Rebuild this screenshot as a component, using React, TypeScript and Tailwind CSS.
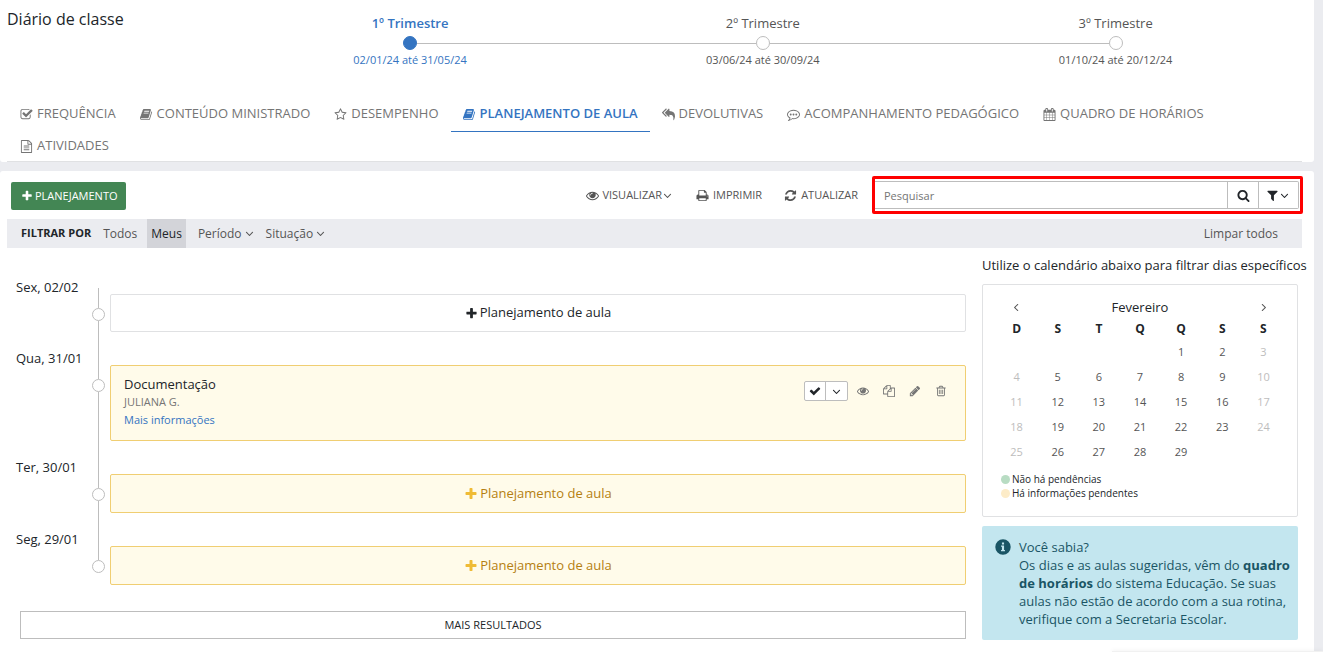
import React from "react";

const icons = {
  book: "M1639 478q40 57 18 129l-275 906q-19 64-76.5 107.5t-122.5 43.5h-923q-77 0-148.5-53.5t-99.5-131.5q-24-67-2-127 0-4 3-27t4-37q1-8-3-21.5t-3-19.5q2-11 8-21t16.5-23.5 16.5-23.5q23-38 45-91.5t30-91.5q3-10 .5-30t-.5-28q3-11 17-28t17-23q21-36 42-92t25-90q1-9-2.5-32t.5-28q4-13 22-30.5t22-22.5q19-26 42.5-84.5t27.5-96.5q1-8-3-25.5t-2-26.5q2-8 9-18t18-23 17-21q8-12 16.5-30.5t15-35 16-36 19.5-32 26.5-23.5 36-11.5 47.5 5.5l-1 3q38-9 51-9h761q74 0 114 56t18 130l-274 906q-36 119-71.5 153.5t-128.5 34.5h-869q-27 0-38 15-11 16-1 43 24 70 144 70h923q29 0 56-15.5t35-41.5l300-987q7-22 5-57 38 15 59 43zm-1064 2q-4 13 2 22.5t20 9.5h608q13 0 25.5-9.5t16.5-22.5l21-64q4-13-2-22.5t-20-9.5h-608q-13 0-25.5 9.5t-16.5 22.5zm-83 256q-4 13 2 22.5t20 9.5h608q13 0 25.5-9.5t16.5-22.5l21-64q4-13-2-22.5t-20-9.5h-608q-13 0-25.5 9.5t-16.5 22.5z",
  eye: "M1664 960q-152-236-381-353 61 104 61 225 0 185-131.5 316.5t-316.5 131.5-316.5-131.5-131.5-316.5q0-121 61-225-229 117-381 353 133 205 333.5 326.5t434.5 121.5 434.5-121.5 333.5-326.5zm-720-384q0-20-14-34t-34-14q-125 0-214.5 89.5t-89.5 214.5q0 20 14 34t34 14 34-14 14-34q0-86 61-147t147-61q20 0 34-14t14-34zm848 384q0 34-20 69-140 230-376.5 368.5t-499.5 138.5-499.5-139-376.5-368q-20-35-20-69t20-69q140-229 376.5-368t499.5-139 499.5 139 376.5 368q20 35 20 69z",
  pencil: "M491 1536l91-91-235-235-91 91v107h128v128h107zm523-928q0-22-22-22-10 0-17 7l-542 542q-7 7-7 17 0 22 22 22 10 0 17-7l542-542q7-7 7-17zm-54-192l416 416-832 832h-416v-416zm683 96q0 53-37 90l-166 166-416-416 166-165q36-38 90-38 53 0 91 38l235 234q37 39 37 91z",
  check: "M1671 566q0 40-28 68l-724 724-136 136q-28 28-68 28t-68-28l-136-136-362-362q-28-28-28-68t28-68l136-136q28-28 68-28t68 28l294 295 656-657q28-28 68-28t68 28l136 136q28 28 28 68z",
  plus: "M1600 736v192q0 40-28 68t-68 28h-416v416q0 40-28 68t-68 28h-192q-40 0-68-28t-28-68v-416h-416q-40 0-68-28t-28-68v-192q0-40 28-68t68-28h416v-416q0-40 28-68t68-28h192q40 0 68 28t28 68v416h416q40 0 68 28t28 68z",
  search: "M1216 832q0-185-131.5-316.5t-316.5-131.5-316.5 131.5-131.5 316.5 131.5 316.5 316.5 131.5 316.5-131.5 131.5-316.5zm512 832q0 52-38 90t-90 38q-54 0-90-38l-343-342q-179 124-399 124-143 0-273.5-55.5t-225-150-150-225-55.5-273.5 55.5-273.5 150-225 225-150 273.5-55.5 273.5 55.5 225 150 150 225 55.5 273.5q0 220-124 399l343 343q37 37 37 90z",
  filter: "M1595 295q17 41-14 70l-493 493v742q0 42-39 59-13 5-25 5-27 0-45-19l-256-256q-19-19-19-45v-486l-493-493q-31-29-14-70 17-39 59-39h1280q42 0 59 39z",
  refresh: "M1639 1056q0 5-1 7-64 268-268 434.5t-478 166.5q-146 0-282.5-55t-243.5-157l-129 129q-19 19-45 19t-45-19-19-45v-448q0-26 19-45t45-19h448q26 0 45 19t19 45-19 45l-137 137q71 66 161 102t187 36q134 0 250-65t186-179q11-17 53-117 8-23 30-23h192q13 0 22.5 9.5t9.5 22.5zm25-800v448q0 26-19 45t-45 19h-448q-26 0-45-19t-19-45 19-45l138-138q-148-137-349-137-134 0-250 65t-186 179q-11 17-53 117-8 23-30 23h-199q-13 0-22.5-9.5t-9.5-22.5v-7q65-268 270-434.5t480-166.5q146 0 284 55.5t245 156.5l130-129q19-19 45-19t45 19 19 45z",
  print: "M448 1536h896v-256h-896v256zm0-640h896v-384h-160q-40 0-68-28t-28-68v-160h-640v640zm1152 64q0-26-19-45t-45-19-45 19-19 45 19 45 45 19 45-19 19-45zm128 0v416q0 13-9.5 22.5t-22.5 9.5h-224v160q0 40-28 68t-68 28h-960q-40 0-68-28t-28-68v-160h-224q-13 0-22.5-9.5t-9.5-22.5v-416q0-79 56.5-135.5t135.5-56.5h64v-544q0-40 28-68t68-28h672q40 0 88 20t76 48l152 152q28 28 48 76t20 88v256h64q79 0 135.5 56.5t56.5 135.5z",
  star: "M1201 1004l306-297-422-62-189-382-189 382-422 62 306 297-73 421 378-199 377 199zm527-357q0 22-26 48l-363 354 86 500q1 7 1 20 0 50-41 50-19 0-40-12l-449-236-449 236q-22 12-40 12-21 0-31.5-14.5t-10.5-35.5q0-6 2-20l86-500-364-354q-25-27-25-48 0-37 56-46l502-73 225-455q19-41 49-41t49 41l225 455 502 73q56 9 56 46z",
  checkSquare: "M1472 930v318q0 119-84.5 203.5t-203.5 84.5h-832q-119 0-203.5-84.5t-84.5-203.5v-832q0-119 84.5-203.5t203.5-84.5h832q63 0 117 25 15 7 18 23 3 17-9 29l-49 49q-10 10-23 10-3 0-9-2-23-6-45-6h-832q-66 0-113 47t-47 113v832q0 66 47 113t113 47h832q66 0 113-47t47-113v-254q0-13 9-22l64-64q10-10 23-10 6 0 12 3 20 8 20 29zm231-489l-814 814q-24 24-57 24t-57-24l-430-430q-24-24-24-57t24-57l110-110q24-24 57-24t57 24l263 263 647-647q24-24 57-24t57 24l110 110q24 24 24 57t-24 57z",
  calendar: "M192 1664h288v-288h-288v288zm352 0h320v-288h-320v288zm-352-352h288v-320h-288v320zm352 0h320v-320h-320v320zm-352-384h288v-288h-288v288zm736 736h320v-288h-320v288zm-384-736h320v-288h-320v288zm768 736h288v-288h-288v288zm-384-352h320v-320h-320v320zm-352-864v-288q0-13-9.5-22.5t-22.5-9.5h-64q-13 0-22.5 9.5t-9.5 22.5v288q0 13 9.5 22.5t22.5 9.5h64q13 0 22.5-9.5t9.5-22.5zm736 864h288v-320h-288v320zm-384-384h320v-288h-320v288zm384 0h288v-288h-288v288zm32-480v-288q0-13-9.5-22.5t-22.5-9.5h-64q-13 0-22.5 9.5t-9.5 22.5v288q0 13 9.5 22.5t22.5 9.5h64q13 0 22.5-9.5t9.5-22.5zm384-64v1280q0 52-38 90t-90 38h-1408q-52 0-90-38t-38-90v-1280q0-52 38-90t90-38h128v-96q0-66 47-113t113-47h64q66 0 113 47t47 113v96h384v-96q0-66 47-113t113-47h64q66 0 113 47t47 113v96h128q52 0 90 38t38 90z",
  file: "M1596 380q28 28 48 76t20 88v1152q0 40-28 68t-68 28h-1344q-40 0-68-28t-28-68v-1600q0-40 28-68t68-28h896q40 0 88 20t76 48zm-444-244v376h376q-10-29-22-41l-313-313q-12-12-41-22zm384 1528v-1024h-416q-40 0-68-28t-28-68v-416h-768v1536h1280zm-1024-864q0-14 9-23t23-9h704q14 0 23 9t9 23v64q0 14-9 23t-23 9h-704q-14 0-23-9t-9-23v-64zm736 224q14 0 23 9t9 23v64q0 14-9 23t-23 9h-704q-14 0-23-9t-9-23v-64q0-14 9-23t23-9h704zm0 256q14 0 23 9t9 23v64q0 14-9 23t-23 9h-704q-14 0-23-9t-9-23v-64q0-14 9-23t23-9h704z",
  trash: "M704 736v576q0 14-9 23t-23 9h-64q-14 0-23-9t-9-23v-576q0-14 9-23t23-9h64q14 0 23 9t9 23zm256 0v576q0 14-9 23t-23 9h-64q-14 0-23-9t-9-23v-576q0-14 9-23t23-9h64q14 0 23 9t9 23zm256 0v576q0 14-9 23t-23 9h-64q-14 0-23-9t-9-23v-576q0-14 9-23t23-9h64q14 0 23 9t9 23zm128 724v-948h-896v948q0 22 7 40.5t14.5 27 10.5 8.5h832q3 0 10.5-8.5t14.5-27 7-40.5zm-672-1076h448l-48-117q-7-9-17-11h-317q-10 2-17 11zm928 32v64q0 14-9 23t-23 9h-96v948q0 83-47 143.5t-113 60.5h-832q-66 0-113-58.5t-47-141.5v-952h-96q-14 0-23-9t-9-23v-64q0-14 9-23t23-9h309l70-167q15-37 54-63t79-26h320q40 0 79 26t54 63l70 167h309q14 0 23 9t9 23z",
  files: "M1696 384q40 0 68 28t28 68v1216q0 40-28 68t-68 28h-960q-40 0-68-28t-28-68v-288h-544q-40 0-68-28t-28-68v-672q0-40 20-88t48-76l408-408q28-28 76-48t88-20h416q40 0 68 28t28 68v328q68-40 128-40h416zm-544 213l-299 299h299v-299zm-640-384l-299 299h299v-299zm196 647l316-316v-416h-384v416q0 40-28 68t-68 28h-416v640h512v-256q0-40 20-88t48-76zm956 804v-1152h-384v416q0 40-28 68t-68 28h-416v640h896z",
  angleDown: "M1395 736q0 13-10 23l-466 466q-10 10-23 10t-23-10l-466-466q-10-10-10-23t10-23l50-50q10-10 23-10t23 10l393 393 393-393q10-10 23-10t23 10l50 50q10 10 10 23z",
  replyAll: "M640 1082v70q0 42-39 59-13 5-25 5-27 0-45-19l-512-512q-19-19-19-45t19-45l512-512q29-31 70-14 39 17 39 59v69l-397 398q-19 19-19 45t19 45zm1152 58q0 58-17 133.5t-38.5 138-48 125-40.5 90.5l-20 40q-8 17-28 17-6 0-9-1-25-8-23-34 43-400-106-565-64-71-170.5-110.5t-267.5-52.5v251q0 42-39 59-13 5-25 5-27 0-45-19l-512-512q-19-19-19-45t19-45l512-512q29-31 70-14 39 17 39 59v262q411 28 599 221 169 173 169 509z",
  comment: "M640 896q0 53-37.5 90.5t-90.5 37.5-90.5-37.5-37.5-90.5 37.5-90.5 90.5-37.5 90.5 37.5 37.5 90.5zm384 0q0 53-37.5 90.5t-90.5 37.5-90.5-37.5-37.5-90.5 37.5-90.5 90.5-37.5 90.5 37.5 37.5 90.5zm384 0q0 53-37.5 90.5t-90.5 37.5-90.5-37.5-37.5-90.5 37.5-90.5 90.5-37.5 90.5 37.5 37.5 90.5zm-512-512q-204 0-381.5 69.5t-282 187.5-104.5 255q0 112 71.5 213.5t201.5 175.5l87 50-27 96q-24 91-70 172 152-63 275-171l43-38 57 6q69 8 130 8 204 0 381.5-69.5t282-187.5 104.5-255-104.5-255-282-187.5-381.5-69.5zm896 512q0 174-120 321.5t-326 233-450 85.5q-70 0-145-8-198 175-460 242-49 14-114 22h-5q-15 0-27-10.5t-16-27.5v-1q-3-4-.5-12t2-10 4.5-9.5l6-9 7-8.5 8-9q7-8 31-34.5t34.5-38 31-39.5 32.5-51 27-59 26-76q-157-89-247.5-220t-90.5-281q0-174 120-321.5t326-233 450-85.5 450 85.5 326 233 120 321.5z",
  info: "M896 128a768 768 0 1 0 0 1536a768 768 0 1 0 0-1536zM790 460h212v190h-212zM700 750h302v450h90v130h-392v-130h90v-320h-90z",
};

type IconName = keyof typeof icons;

function Icon({ name, className = "size-[13px]" }: { name: IconName; className?: string }) {
  return (
    <svg viewBox="0 0 1792 1792" fill="currentColor" fillRule="evenodd" aria-hidden="true" className={`shrink-0 ${className}`}>
      <path d={icons[name]} />
    </svg>
  );
}

const terms = [
  { name: "1º Trimestre", dates: "02/01/24 até 31/05/24", active: true },
  { name: "2º Trimestre", dates: "03/06/24 até 30/09/24", active: false },
  { name: "3º Trimestre", dates: "01/10/24 até 20/12/24", active: false },
];

const tabs: { label: string; icon: IconName; active?: boolean }[] = [
  { label: "FREQUÊNCIA", icon: "checkSquare" },
  { label: "CONTEÚDO MINISTRADO", icon: "book" },
  { label: "DESEMPENHO", icon: "star" },
  { label: "PLANEJAMENTO DE AULA", icon: "book", active: true },
  { label: "DEVOLUTIVAS", icon: "replyAll" },
  { label: "ACOMPANHAMENTO PEDAGÓGICO", icon: "comment" },
  { label: "QUADRO DE HORÁRIOS", icon: "calendar" },
  { label: "ATIVIDADES", icon: "file" },
];

const weeks: (number | null)[][] = [
  [null, null, null, null, 1, 2, 3],
  [4, 5, 6, 7, 8, 9, 10],
  [11, 12, 13, 14, 15, 16, 17],
  [18, 19, 20, 21, 22, 23, 24],
  [25, 26, 27, 28, 29, null, null],
];

function Terms() {
  return (
    <ol className="mt-[10px] mr-[10px] ml-[110px] grid flex-1 grid-cols-3">
      {terms.map((t, i) => (
        <li key={t.name} className={`flex flex-col items-center ${t.active ? "text-[#3474c1]" : "text-[#555]"}`}>
          <span className={`text-[13px] leading-[26px] ${t.active ? "font-semibold" : ""}`}>{t.name}</span>
          <span className="flex w-full items-center">
            <span className={`h-px flex-1 ${i > 0 ? "bg-[#bdbdbd]" : ""}`} />
            <span className={`size-[14px] rounded-full border ${t.active ? "border-[#3474c1] bg-[#3474c1]" : "border-[#bdbdbd] bg-white"}`} />
            <span className={`h-px flex-1 ${i < 2 ? "bg-[#bdbdbd]" : ""}`} />
          </span>
          <span className={`text-[11px] leading-5 ${t.active ? "font-medium" : ""}`}>{t.dates}</span>
        </li>
      ))}
    </ol>
  );
}

function Entry({ date, first, last, children }: { date: string; first?: boolean; last?: boolean; children: React.ReactNode }) {
  return (
    <li className="flex">
      <span className="w-[76px] shrink-0 text-[13px] leading-5">{date}</span>
      <span className="flex w-[13px] shrink-0 flex-col items-center">
        <span className={`w-px bg-[#bdbdbd] ${first ? "mt-[11px] h-5" : "h-[31px]"}`} />
        <span className="size-[13px] rounded-full border border-[#bdbdbd] bg-white" />
        {!last && <span className="w-px flex-1 bg-[#bdbdbd]" />}
      </span>
      <div className="min-w-0 flex-1 pt-[17px] pb-4 pl-[5px]">{children}</div>
    </li>
  );
}

function AddPlan({ pending }: { pending?: boolean }) {
  return (
    <button
      className={`flex w-full items-center justify-center gap-[2px] rounded-[2px] border text-[13px] ${
        pending ? "h-[39px] border-[#f0ce72] bg-[#fffbea] text-[#b57f10]" : "h-[38px] border-[#e0e1e3] bg-white text-[#212529]"
      }`}
    >
      <Icon name="plus" className={pending ? "size-[14px] text-[#efbb35]" : "size-[13px]"} />
      Planejamento de aula
    </button>
  );
}

function Calendar() {
  return (
    <div className="rounded-[2px] border border-[#e0e1e3] px-[13px] pt-3 pb-4">
      <div className="grid grid-cols-7 items-center text-[13px] leading-5">
        <button aria-label="Mês anterior" className="flex justify-center text-[#555]">
          <Icon name="angleDown" className="size-[13px] rotate-90" />
        </button>
        <span className="col-span-5 text-center">Fevereiro</span>
        <button aria-label="Próximo mês" className="flex justify-center text-[#555]">
          <Icon name="angleDown" className="size-[13px] -rotate-90" />
        </button>
      </div>
      <table className="w-full table-fixed text-center">
        <thead>
          <tr>
            {["D", "S", "T", "Q", "Q", "S", "S"].map((d, i) => (
              <th key={i} className="h-[23px] p-0 text-xs font-bold">{d}</th>
            ))}
          </tr>
        </thead>
        <tbody>
          {weeks.map((week, w) => (
            <tr key={w}>
              {week.map((day, i) => (
                <td key={i} className="h-[25px] p-0 text-[11px]">
                  {day && (
                    <button className={i === 0 || i === 6 ? "text-[#bdbdbd]" : "text-[#555]"}>{day}</button>
                  )}
                </td>
              ))}
            </tr>
          ))}
        </tbody>
      </table>
      <ul className="mt-[7px] pl-[5px] text-[10px] leading-[14px]">
        <li className="flex items-center gap-[2px]">
          <span className="size-[9px] rounded-full bg-[#b8dcc3]" />
          Não há pendências
        </li>
        <li className="flex items-center gap-[2px]">
          <span className="size-[9px] rounded-full bg-[#fdecc8]" />
          Há informações pendentes
        </li>
      </ul>
    </div>
  );
}

export default function App() {
  return (
    <div className="flex min-h-screen flex-col gap-[9px] bg-[#ebecf0] pr-[9px] font-['Open_Sans','Noto_Sans',sans-serif] text-[#212529]">
      <header className="rounded-b-[3px] bg-white pr-3 pl-[7px]">
        <div className="flex h-[100px] items-start">
          <h1 className="mt-2 text-base leading-[22px]">Diário de classe</h1>
          <Terms />
        </div>
        <nav className="flex flex-wrap gap-y-[3px] border-b border-[#e0e1e3] pl-px">
          {tabs.map((t) => (
            <a
              key={t.label}
              href="#"
              className={`-mb-[3px] flex h-8 items-center gap-1 border-b px-3 pb-[3px] text-[13px] ${
                t.active ? "border-[#3474c1] font-semibold text-[#3474c1]" : "border-transparent text-[#757575]"
              }`}
            >
              <Icon name={t.icon} />
              {t.label}
            </a>
          ))}
        </nav>
      </header>

      <main className="flex-1 rounded-t-[3px] bg-white pr-3 pb-3 pl-[7px]">
        <div className="flex items-center pt-[5px] pl-1">
          <button className="mb-1 flex h-7 items-center gap-[2px] self-end rounded-[2px] bg-[#438654] pr-2 pl-[10px] text-[11px] text-white">
            <Icon name="plus" className="size-3" />
            PLANEJAMENTO
          </button>
          <div className="ml-auto flex items-center gap-[22px] pr-[14px] text-[11px] text-[#555]">
            <button className="flex items-center">
              <Icon name="eye" className="mr-[3px] size-[13px]" />
              VISUALIZAR
              <Icon name="angleDown" className="-ml-px size-[13px]" />
            </button>
            <button className="flex items-center gap-1">
              <Icon name="print" />
              IMPRIMIR
            </button>
            <button className="flex items-center gap-1">
              <Icon name="refresh" />
              ATUALIZAR
            </button>
          </div>
          <form className="-mr-px flex h-[38px] w-[431px] items-center rounded-[2px] border-[3px] border-[#fe0000] pr-px">
            <input
              type="text"
              aria-label="Pesquisar"
              placeholder="Pesquisar"
              className="h-7 min-w-0 flex-1 border-y border-[#bdbdbd] px-[9px] text-[11px] outline-none placeholder:text-[#757575]"
            />
            <button type="button" aria-label="Buscar" className="flex h-7 w-8 items-center justify-center border border-[#bdbdbd]">
              <Icon name="search" />
            </button>
            <button type="button" aria-label="Filtros" className="flex h-7 w-10 items-center justify-center rounded-r-[2px] border border-l-0 border-[#bdbdbd]">
              <Icon name="filter" />
              <Icon name="angleDown" className="-ml-px size-[13px]" />
            </button>
          </form>
        </div>

        <div className="mt-[5px] flex h-[29px] items-center bg-[#ebecf0] pr-6 pl-[14px] text-xs text-[#555]">
          <span className="mr-2 text-[11px] font-bold text-[#212529]">FILTRAR POR</span>
          <button className="px-1">Todos</button>
          <button className="ml-[6px] h-full bg-[#d3d4d9] px-1 text-[#212529]">Meus</button>
          <button className="ml-3 flex items-center gap-px">
            Período
            <Icon name="angleDown" />
          </button>
          <button className="ml-[10px] flex items-center gap-px">
            Situação
            <Icon name="angleDown" />
          </button>
          <button className="ml-auto">Limpar todos</button>
        </div>

        <div className="flex items-start gap-4 pr-1">
          <section className="min-w-0 flex-1 pt-[29px] pl-[9px]">
            <ol>
              <Entry date="Sex, 02/02" first>
                <AddPlan />
              </Entry>
              <Entry date="Qua, 31/01">
                <article className="flex h-[76px] items-start justify-between rounded-[2px] border border-[#f0ce72] bg-[#fffbea] pt-[9px] pr-[18px] pl-[13px]">
                  <div>
                    <h2 className="text-[13px] leading-[18px]">Documentação</h2>
                    <p className="text-[11px] leading-[18px] text-[#757575]">JULIANA G.</p>
                    <a href="#" className="block text-[11px] leading-[18px] text-[#3474c1]">Mais informações</a>
                  </div>
                  <div className="mt-[6px] flex items-center gap-[14px] text-[#757575]">
                    <div className="mr-[-5px] flex h-5 rounded-[2px] border border-[#bdbdbd] bg-white text-[#212529]">
                      <button aria-label="Validar" className="flex w-[21px] items-center justify-center border-r border-[#bdbdbd]">
                        <Icon name="check" className="size-3" />
                      </button>
                      <button aria-label="Mais opções" className="flex w-[21px] items-center justify-center">
                        <Icon name="angleDown" />
                      </button>
                    </div>
                    <button aria-label="Visualizar"><Icon name="eye" className="size-3" /></button>
                    <button aria-label="Copiar"><Icon name="files" className="size-3" /></button>
                    <button aria-label="Editar"><Icon name="pencil" className="size-3" /></button>
                    <button aria-label="Excluir"><Icon name="trash" className="size-3" /></button>
                  </div>
                </article>
              </Entry>
              <Entry date="Ter, 30/01">
                <AddPlan pending />
              </Entry>
              <Entry date="Seg, 29/01" last>
                <AddPlan pending />
              </Entry>
            </ol>
            <div className="pt-[10px] pl-1">
              <button className="h-7 w-full border border-[#bdbdbd] text-[11px]">MAIS RESULTADOS</button>
            </div>
          </section>

          <aside className="w-[316px] shrink-0 pt-[7px]">
            <p className="mb-[9px] text-[13px] leading-5 whitespace-nowrap">Utilize o calendário abaixo para filtrar dias específicos</p>
            <Calendar />
            <div className="mt-[9px] flex gap-[7px] rounded-[2px] bg-[#c3e6ef] py-3 pr-1 pl-3 text-[13px] leading-[18px] text-[#1a5565]">
              <Icon name="info" className="size-[18px]" />
              <div>
                <p>Você sabia?</p>
                <p>
                  Os dias e as aulas sugeridas, vêm do <b>quadro de horários</b> do sistema Educação. Se suas aulas não
                  estão de acordo com a sua rotina, verifique com a Secretaria Escolar.
                </p>
              </div>
            </div>
          </aside>
        </div>
      </main>
      <div className="fixed right-0 bottom-0 h-px w-[211px] bg-[#f1f1f1] shadow-[0_0_4px_rgba(0,0,0,0.15)]" />
    </div>
  );
}
